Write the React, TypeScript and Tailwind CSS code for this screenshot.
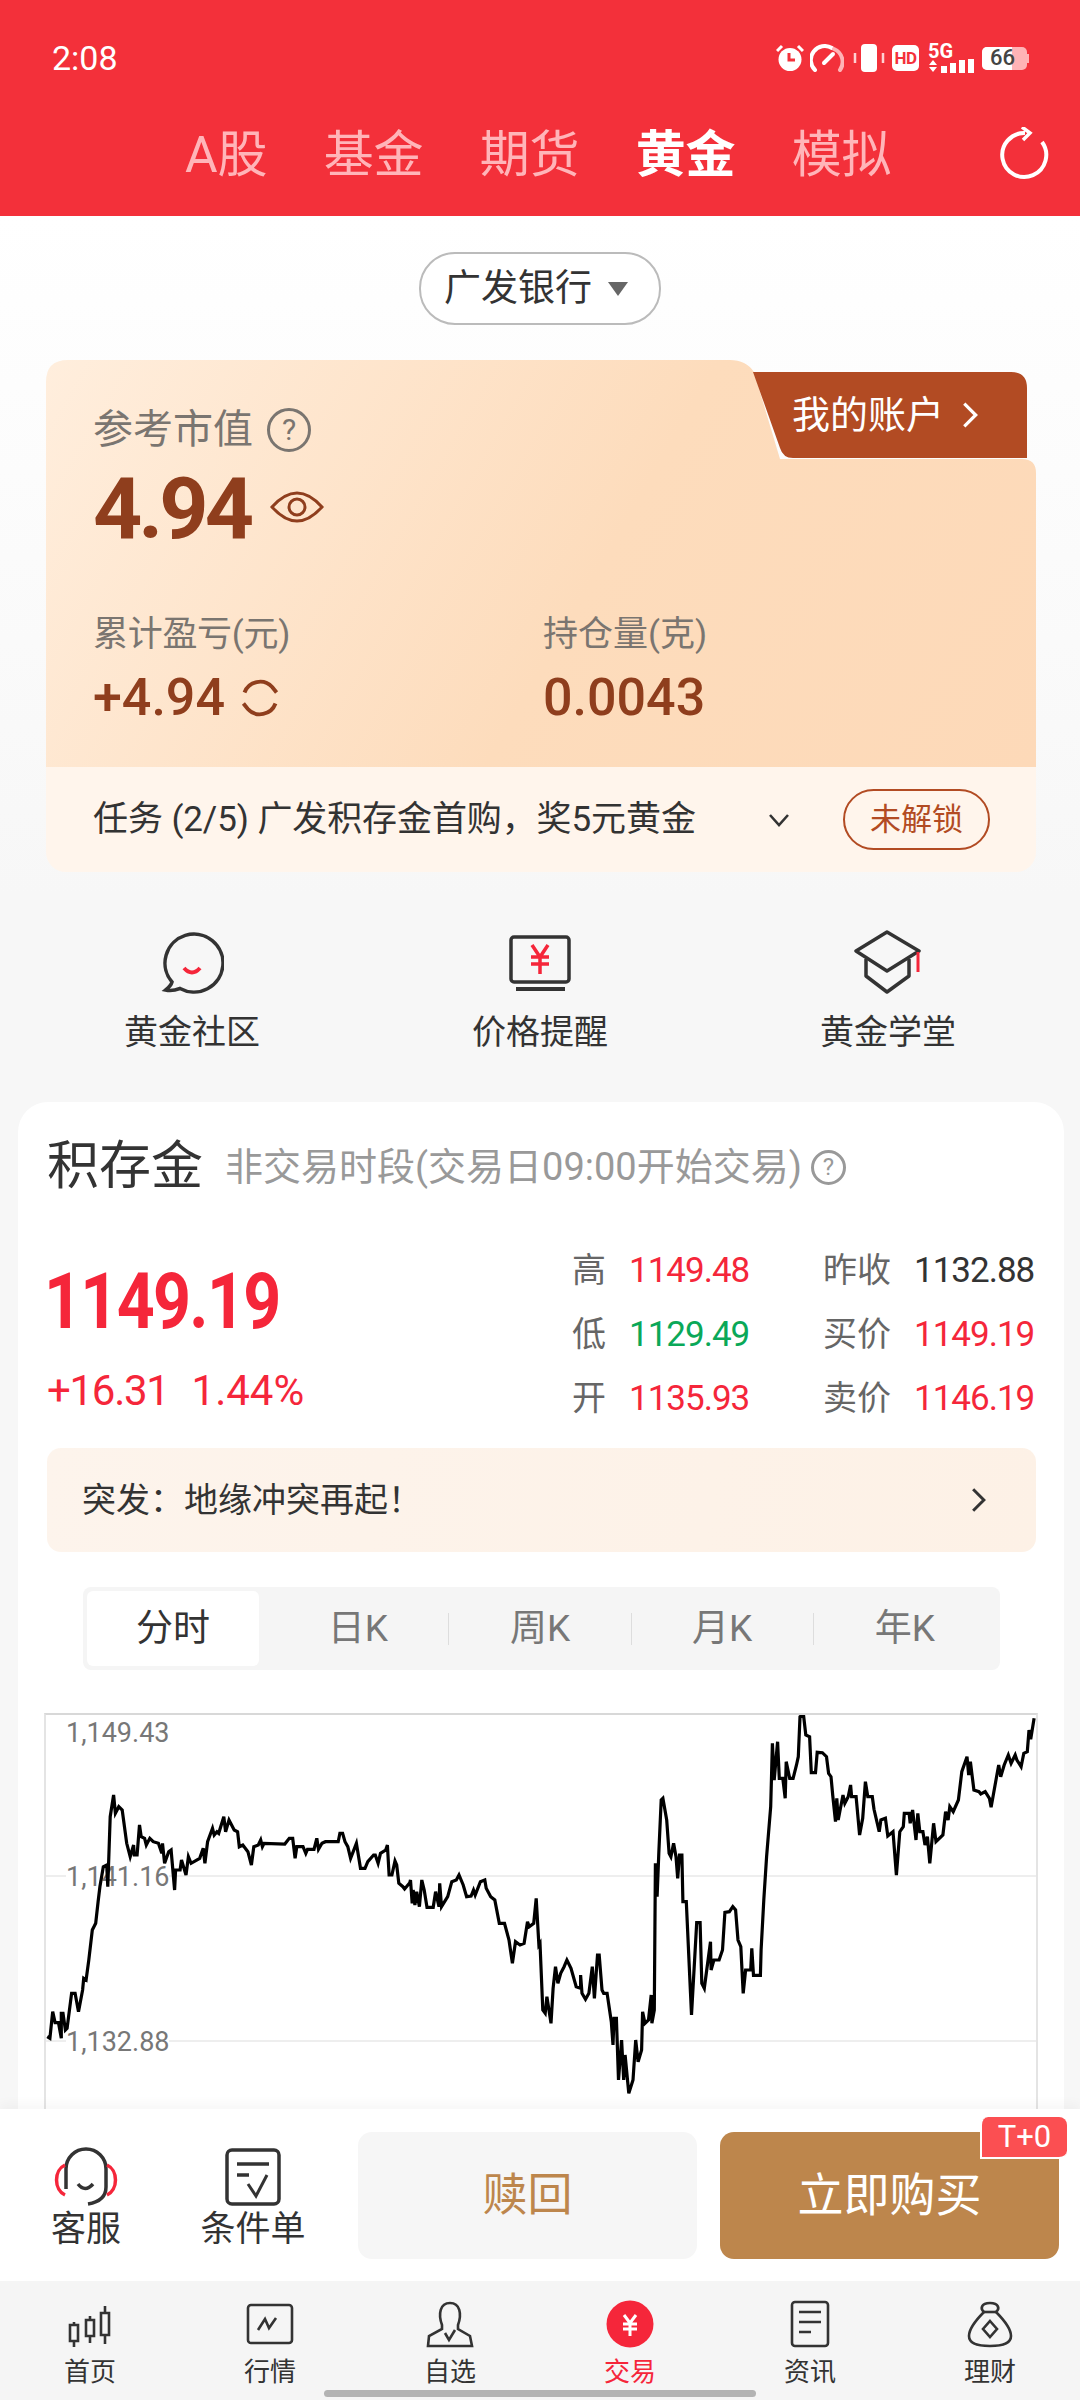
import type { ReactNode } from 'react'

// chart trace, pairs taken from the 540px wide crops (x scale 2.904, y scale 3)
const LEFT = [137,1010,145,1015,153,935,160,968,170,968,178,1015,178,940,183,940,190,990,195,985,208,880,218,880,228,935,240,870,243,835,250,840,258,780,268,690,278,670,285,605,290,560,300,500,310,495,313,560,320,350,330,285,335,340,345,320,355,330,368,430,378,470,388,435,390,465,398,465,405,375,410,410,420,415,425,435,435,415,445,425,460,430,470,460,472,430,478,490,490,455,497,450,507,570,510,510,523,510,527,480,540,525,547,470,555,490,580,475,590,445,595,490,603,425,617,385,622,405,630,395,635,400,650,350,655,395,665,360,680,390,690,395,695,440,705,435,720,455,730,495,737,440,750,435,757,420,762,440,767,430,827,432,840,415,850,415,857,475,862,440,880,440,888,460,893,448,912,448,920,415,925,448,935,430,945,425,982,425,987,400,995,400,1002,425,1010,440,1018,475,1035,430,1047,505,1060,505,1068,485,1085,465,1090,465,1098,490,1105,460,1120,450,1125,435,1130,525,1138,525,1147,483,1152,495,1158,550,1170,560,1175,567,1190,548,1192,540,1197,610,1200,570,1205,615,1210,575,1218,620,1225,540,1232,570,1240,622,1258,622,1265,575,1275,620,1277,550,1282,620,1300,590,1312,545,1325,540,1333,525,1345,555,1355,590,1368,588,1375,570,1380,585,1395,545,1408,540,1412,565,1425,590,1437,600,1450,670,1465,670,1478,720,1488,790,1497,725,1510,735,1522,730,1532,665,1537,680,1550,670,1557,595,1565,735]
const RIGHT = [0,730,8,930,15,940,20,890,32,970,38,865,45,800,52,850,60,820,70,800,78,780,90,805,105,860,118,865,118,825,122,880,132,898,142,880,152,800,158,895,167,765,172,765,180,870,185,880,195,880,207,965,212,1035,215,955,222,955,228,1140,237,1020,243,1140,247,1065,258,1180,270,1140,278,1020,285,1085,295,1050,298,935,305,970,315,960,323,885,325,970,332,930,335,490,340,590,345,460,352,300,357,295,368,360,375,460,380,470,388,430,395,470,400,535,405,465,412,465,415,605,425,605,437,880,440,945,455,668,465,668,470,850,477,865,495,725,497,810,505,780,520,780,530,750,537,637,550,635,560,620,568,630,575,720,583,740,590,880,597,810,612,810,615,745,620,826,640,826,642,750,650,600,658,470,670,320,675,130,680,240,690,125,695,235,705,235,712,295,715,185,725,235,735,235,745,195,750,170,755,50,765,42,772,105,783,110,788,218,800,218,805,157,820,158,832,170,838,220,845,230,850,285,858,365,862,295,866,360,880,285,885,310,895,290,902,255,905,290,918,290,928,405,937,355,945,245,952,290,965,290,970,328,985,395,990,360,1003,355,1010,408,1025,395,1035,525,1045,395,1055,380,1058,340,1072,340,1075,370,1082,330,1092,420,1097,340,1103,395,1112,395,1118,435,1125,410,1132,490,1143,370,1150,425,1170,405,1178,335,1185,360,1190,320,1200,335,1215,300,1225,215,1240,170,1245,225,1250,185,1260,270,1275,275,1280,282,1293,275,1305,295,1310,322,1325,235,1332,195,1338,230,1348,195,1360,165,1368,190,1380,165,1385,180,1397,200,1405,160,1415,155,1420,90,1425,118,1435,55]

function toPoints(raw: number[], offset: number) {
  const out: string[] = []
  for (let i = 0; i < raw.length; i += 2) {
    out.push(`${(offset + raw[i] / 2.904).toFixed(1)},${(1700 + raw[i + 1] / 3).toFixed(1)}`)
  }
  return out.join(' ')
}
const LINE = `${toPoints(LEFT, 0)} ${toPoints(RIGHT, 540)}`

const STATS = [
  { a: '高', b: '1149.48', bc: 'text-[#f5263a]', c: '昨收', d: '1132.88', dc: 'text-[#333]' },
  { a: '低', b: '1129.49', bc: 'text-[#0aa858]', c: '买价', d: '1149.19', dc: 'text-[#f5263a]' },
  { a: '开', b: '1135.93', bc: 'text-[#f5263a]', c: '卖价', d: '1146.19', dc: 'text-[#f5263a]' },
]

function Help({ className }: { className: string }) {
  return <span className={`flex items-center justify-center rounded-full border-[3px] ${className}`}>?</span>
}

function Chevron({ className, color = '#333' }: { className: string; color?: string }) {
  return (
    <svg viewBox="0 0 14 24" className={className} fill="none" stroke={color} strokeWidth="2.8">
      <path d="M2 2 L12 12 L2 22" />
    </svg>
  )
}

function StatusIcons() {
  return (
    <div className="ml-auto mr-[51px] flex items-center">
      <svg width="28" height="28" viewBox="0 0 28 28" className="mr-[6px]">
        <circle cx="14" cy="15.5" r="11.5" fill="#fff" />
        <path d="M1 7 L6 2 M27 7 L22 2" stroke="#fff" strokeWidth="3" />
        <path d="M13 9 V16 H19" stroke="#f4303a" strokeWidth="3" fill="none" />
      </svg>
      <svg width="34" height="28" viewBox="0 0 34 28" className="mr-[8px]" fill="none">
        <path d="M5 26 A14 14 0 0 1 22 4" stroke="#fff" strokeWidth="4" strokeLinecap="round" />
        <path d="M24 5 A14 14 0 0 1 30 26" stroke="#ffb3b6" strokeWidth="4" strokeLinecap="round" />
        <path d="M14 19 L23 10" stroke="#fff" strokeWidth="4" strokeLinecap="round" />
      </svg>
      <svg width="34" height="28" viewBox="0 0 34 28" className="mr-[6px]">
        <rect x="9" y="0" width="16" height="28" rx="4" fill="#fff" />
        <path d="M3 9 V19 M31 9 V19" stroke="#ffd0d2" strokeWidth="2.5" />
      </svg>
      <span className="mr-[9px] flex h-[26px] w-[27px] items-center justify-center rounded-[5px] bg-white font-bold text-[17px] leading-none tracking-[-0.5px] text-[#f4303a]">HD</span>
      <div className="mr-[7px] flex w-[47px] flex-col">
        <span className="h-[15px] font-bold text-[20px] leading-[15px] text-white">5G</span>
        <svg width="47" height="14" viewBox="0 0 47 14">
          <path d="M1 6 L5 1 L9 6Z M1 8 L9 8 L5 13Z" fill="#fff" />
          <path d="M13 7 H19 V14 H13Z M22 4 H28 V14 H22Z M31 1 H37 V14 H31Z M40 0 H46 V14 H40Z" fill="#fff" />
        </svg>
      </div>
      <div className="relative flex h-[23px] w-[45px] items-center overflow-hidden rounded-[5px] bg-[#ffb3b6]">
        <div className="absolute inset-y-0 left-0 w-[30px] bg-white" />
        <span className="relative ml-[8px] text-[22px] font-medium leading-none text-[#444]">66</span>
      </div>
      <span className="h-[9px] w-[2px] bg-[#ffb3b6]" />
    </div>
  )
}

function Header() {
  const tabs = ['A股', '基金', '期货', '黄金', '模拟']
  return (
    <div className="h-[216px] shrink-0 bg-[#f3303a]">
      <div className="flex h-[116px] items-center pl-[52px]">
        <span className="text-[34px] text-white">2:08</span>
        <StatusIcons />
      </div>
      <div className="flex h-[78px] items-center pl-[185px] pr-[30px]">
        {tabs.map((t) => (
          <span key={t} className={`mr-[56px] text-[50px] leading-none ${t === '黄金' ? 'font-bold text-white' : 'text-[#ffb5b9]'}`}>
            {t}
          </span>
        ))}
        <svg width="52" height="56" viewBox="0 0 52 56" fill="none" className="ml-auto" stroke="#fff" strokeWidth="4">
          <path d="M44 15 A22 22 0 1 1 27 6" />
          <path d="M24 0 L32 6 L25 13" strokeWidth="3.5" />
        </svg>
      </div>
    </div>
  )
}

function AssetCard() {
  return (
    <div className="ml-[46px] mt-[35px] w-[990px]">
      <div className="relative">
        <div className="h-[407px] bg-[linear-gradient(120deg,#ffeedd_0%,#fddcbc_55%,#fdd9b8_100%)] pl-[47px] pt-[48px] [clip-path:path('M0_22Q0_0_22_0L684_0Q700_0_708_12L734_99L976_99Q990_99_990_113L990_407L0_407Z')]">
          <div className="flex h-[44px] items-center text-[40px] leading-none text-[#7a7570]">
            参考市值
            <Help className="ml-[14px] h-[44px] w-[44px] border-[#7a7570] text-[30px]" />
          </div>
          <div className="mt-[17px] flex h-[80px] items-center">
            <span className="text-[86px] font-bold leading-none tracking-[-4px] text-[#8f3e1d]">4.94</span>
            <svg width="54" height="40" viewBox="0 0 54 40" fill="none" stroke="#8f3e1d" strokeWidth="3" className="ml-[20px] mt-[-4px]">
              <path d="M2 20 Q27 -8 52 20 Q27 48 2 20Z" />
              <circle cx="27" cy="20" r="8" />
            </svg>
          </div>
          <div className="mt-[66px] flex">
            <div className="w-[450px]">
              <div className="h-[40px] text-[35px] leading-[40px] tracking-[-0.3px] text-[#7a7570]">累计盈亏(元)</div>
              <div className="mt-[15px] flex h-[56px] items-center">
                <span className="text-[52px] font-medium leading-none text-[#8f3e1d]">+4.94</span>
                <svg width="42" height="42" viewBox="0 0 38 38" fill="none" stroke="#8f3e1d" strokeWidth="3.5" className="ml-[14px]">
                  <path d="M5 14 A15 15 0 0 1 30 9 L34 14" />
                  <path d="M33 24 A15 15 0 0 1 8 29 L4 24" />
                </svg>
              </div>
            </div>
            <div>
              <div className="h-[40px] text-[35px] leading-[40px] text-[#7a7570]">持仓量(克)</div>
              <div className="mt-[15px] flex h-[56px] items-center text-[52px] font-medium leading-none text-[#8f3e1d]">0.0043</div>
            </div>
          </div>
        </div>
        {/* 我的账户 tab sits in the notch of the card */}
        <div className="absolute left-[707px] top-[12px] flex h-[86px] w-[274px] items-center bg-[#b24b23] pl-[39px] text-[38px] leading-none text-white [clip-path:path('M0_0L258_0Q274_0_274_16L274_86L40_86Q30_86_27_76Z')]">
          我的账户
          <Chevron className="ml-[18px] h-[28px] w-[16px]" color="#fff" />
        </div>
      </div>
      <div className="flex h-[105px] items-center rounded-b-[20px] bg-[#fff5ec] pl-[47px] pr-[46px]">
        <span className="text-[35px] leading-none tracking-[-0.1px] text-[#333]">任务 (2/5) 广发积存金首购，奖5元黄金</span>
        <svg width="22" height="14" viewBox="0 0 22 14" fill="none" stroke="#333" strokeWidth="2.6" className="ml-auto">
          <path d="M2 2 L11 12 L20 2" />
        </svg>
        <span className="ml-[53px] flex h-[61px] w-[147px] items-center justify-center rounded-full border-2 border-[#b24b23] text-[31px] leading-none text-[#b24b23]">未解锁</span>
      </div>
    </div>
  )
}

function Shortcut({ icon, label }: { icon: ReactNode; label: string }) {
  return (
    <div className="flex flex-col items-center">
      <div className="flex h-[64px] items-center justify-center">{icon}</div>
      <span className="mt-[16px] text-[34px] leading-[44px] text-[#333]">{label}</span>
    </div>
  )
}

function Shortcuts() {
  return (
    <div className="mt-[58px] grid grid-cols-3 px-[18px]">
      <Shortcut
        label="黄金社区"
        icon={
          <svg width="64" height="64" viewBox="0 0 64 64" fill="none">
            <path d="M12 52 A29 29 0 1 1 20 58.5 C16 60 10 61 5.5 60 C8 58 11 56 12 52Z" stroke="#333" strokeWidth="3.5" />
            <path d="M24 38 Q32 47 40 38" stroke="#f5263a" strokeWidth="4" />
          </svg>
        }
      />
      <Shortcut
        label="价格提醒"
        icon={
          <svg width="64" height="64" viewBox="0 0 64 64" fill="none">
            <rect x="3" y="7" width="58" height="45" rx="3" stroke="#333" strokeWidth="3.5" />
            <path d="M8 59 H57" stroke="#333" strokeWidth="4" />
            <path d="M24 15 L32 27 L40 15 M23 27 H41 M23 34 H41 M32 27 V44" stroke="#f5263a" strokeWidth="3.5" />
          </svg>
        }
      />
      <Shortcut
        label="黄金学堂"
        icon={
          <svg width="68" height="64" viewBox="0 0 68 64" fill="none">
            <path d="M33 2 L65 21 L33 41 L2 21Z" stroke="#333" strokeWidth="3.5" strokeLinejoin="round" />
            <path d="M12 29 V46 L33 62 L55 46 V29" stroke="#333" strokeWidth="3.5" strokeLinejoin="round" />
            <path d="M64 22 V42" stroke="#f5263a" strokeWidth="3" />
          </svg>
        }
      />
    </div>
  )
}

function Quote() {
  return (
    <div className="pl-[29px] pr-[28px]">
      <div className="flex h-[60px] items-center">
        <span className="text-[52px] leading-none text-[#333]">积存金</span>
        <span className="ml-[22px] text-[38px] leading-none text-[#999]">非交易时段(交易日09:00开始交易)</span>
        <Help className="ml-[9px] h-[35px] w-[35px] border-[#999] text-[24px] text-[#999]" />
      </div>
      <div className="mt-[41px] flex h-[192px]">
        <div className="w-[525px] shrink-0">
          <div className="-ml-[3px] mt-[20px] h-[88px] origin-left scale-x-[0.85] text-[78px] font-bold leading-[88px] tracking-[-2px] text-[#f5263a]">1149.19</div>
          <div className="mt-[20px] flex h-[50px] items-center text-[42px] leading-none text-[#f5263a]">
            <span className="tracking-[-1.3px]">+16.31</span>
            <span className="ml-[23px]">1.44%</span>
          </div>
        </div>
        <div className="grid h-[192px] shrink-0 grid-cols-[57px_194px_91px_auto] grid-rows-3 items-center">
          {STATS.map((s) => (
            <div key={s.a} className="contents">
              <span className="text-[34px] leading-none text-[#666]">{s.a}</span>
              <span className={`text-[35px] leading-none tracking-[-1px] ${s.bc}`}>{s.b}</span>
              <span className="text-[34px] leading-none text-[#666]">{s.c}</span>
              <span className={`text-[35px] leading-none tracking-[-1px] ${s.dc}`}>{s.d}</span>
            </div>
          ))}
        </div>
      </div>
      <div className="mt-[18px] flex h-[104px] items-center rounded-[14px] bg-[linear-gradient(100deg,#fdf4ec,#fdf1e6)] pl-[35px] pr-[50px]">
        <span className="text-[34px] leading-none text-[#333]">突发：地缘冲突再起！</span>
        <Chevron className="ml-auto h-[26px] w-[15px]" />
      </div>
      <PeriodTabs />
    </div>
  )
}

function PeriodTabs() {
  const rest = ['日K', '周K', '月K', '年K']
  return (
    <div className="ml-[36px] mt-[35px] flex h-[83px] w-[917px] items-center rounded-[8px] bg-[#f5f5f5] p-[4px]">
      <div className="mr-[8px] flex h-full w-[173px] items-center justify-center rounded-[6px] bg-white text-[37px] leading-none text-[#333]">分时</div>
      {rest.map((t, i) => (
        <div key={t} className="flex h-full w-[183px] items-center">
          <span className="flex-1 text-center text-[37px] leading-none text-[#777]">{t}</span>
          {i < 3 && <span className="h-[32px] w-px bg-[#ddd]" />}
        </div>
      ))}
    </div>
  )
}

function Chart() {
  const labels = [
    { t: '1,149.43', c: 'top-0' },
    { t: '1,141.16', c: 'top-[144px]' },
    { t: '1,132.88', c: 'top-[309px]' },
  ]
  return (
    <div className="relative ml-[26px] mt-[43px] h-[400px] w-[994px] border-x-2 border-t-2 border-x-[#e4e4e4] border-t-[#d8d8d8]">
      <div className="absolute inset-x-0 top-[160px] h-[2px] bg-[#eee]" />
      <div className="absolute inset-x-0 top-[325px] h-[2px] bg-[#eee]" />
      {labels.map((l) => (
        <span key={l.t} className={`absolute left-[20px] bg-white text-[27px] leading-[36px] text-[#777] ${l.c}`}>
          {l.t}
        </span>
      ))}
      <svg viewBox="46 1715 990 394" className="absolute left-0 top-0 h-[394px] w-[990px]" fill="none">
        <polyline points={LINE} stroke="#000" strokeWidth="3.2" strokeLinejoin="miter" />
      </svg>
    </div>
  )
}

function ActionBar() {
  return (
    <div className="relative z-10 flex h-[172px] shrink-0 items-center bg-white shadow-[0_-6px_10px_rgba(0,0,0,0.03)]">
      <div className="mt-[10px] flex w-[172px] flex-col items-center">
        <svg width="68" height="60" viewBox="0 0 68 60" fill="none">
          <path d="M14 42 V22 A20 20 0 0 1 54 22 V40 Q54 54 36 57" stroke="#333" strokeWidth="3.5" />
          <path d="M13 18 A13 16 0 0 0 13 48 M55 18 A13 16 0 0 1 55 48" stroke="#f5263a" strokeWidth="3.5" />
          <path d="M26 37 Q33 46 41 37" stroke="#333" strokeWidth="3.5" />
        </svg>
        <span className="text-[35px] leading-[46px] text-[#333]">客服</span>
      </div>
      <div className="mt-[10px] flex w-[162px] flex-col items-center">
        <svg width="68" height="60" viewBox="0 0 68 60" fill="none" stroke="#333">
          <rect x="8" y="3" width="52" height="54" rx="5" strokeWidth="3.5" />
          <path d="M18 17 H50 M18 28 H30" strokeWidth="3.5" />
          <path d="M29 37 L37 49 L48 28" strokeWidth="3" />
        </svg>
        <span className="text-[35px] leading-[46px] text-[#333]">条件单</span>
      </div>
      <div className="ml-[24px] flex h-[127px] w-[339px] items-center justify-center rounded-[14px] bg-[#f6f6f6] text-[45px] leading-none text-[#bd864c]">赎回</div>
      <div className="relative ml-[23px] flex h-[127px] w-[339px] items-center justify-center rounded-[14px] bg-[#bd864c] text-[46px] leading-none text-white">
        立即购买
        <span className="absolute right-[-8px] top-[-15px] flex h-[42px] w-[87px] items-center justify-center rounded-[8px] rounded-bl-none border-b-2 border-l-2 border-white bg-[#fb4f52] text-[31px] leading-none">T+0</span>
      </div>
    </div>
  )
}

function NavItem({ label, active, children }: { label: string; active?: boolean; children: ReactNode }) {
  return (
    <div className="flex w-[180px] flex-col items-center">
      <svg width="48" height="48" viewBox="0 0 48 48" fill="none" stroke="#333" strokeWidth="2.6">
        {children}
      </svg>
      <span className={`mt-[6px] text-[26px] leading-[36px] ${active ? 'text-[#f5263a]' : 'text-[#333]'}`}>{label}</span>
    </div>
  )
}

function BottomNav() {
  return (
    <div className="relative flex h-[119px] shrink-0 bg-[#f5f5f5] pt-[19px]">
      <NavItem label="首页">
        <path d="M4 25 H12 V41 H4Z M8 25 V22 M8 41 V47 M20 20 H28 V36 H20Z M24 20 V16 M24 36 V43 M35 13 H43 V35 H35Z M39 13 V6 M39 35 V44" />
      </NavItem>
      <NavItem label="行情">
        <rect x="2" y="5" width="44" height="38" rx="3" />
        <path d="M12 30 L19 19 L23 28 L30 18" />
      </NavItem>
      <NavItem label="自选">
        <path d="M16 25 C12 14 14 3 24 3 C34 3 36 14 32 25 L32 29 L44 36 L46 46 H2 L3 36 L16 29Z" />
        <path d="M19 33 L23 40 L29 30" />
      </NavItem>
      <NavItem label="交易" active>
        <circle cx="24" cy="24" r="23.5" fill="#f5263a" stroke="none" />
        <path d="M18 15 L24 23 L30 15 M17 24 H31 M17 29 H31 M24 23 V36" stroke="#fff" strokeWidth="3" />
      </NavItem>
      <NavItem label="资讯">
        <rect x="6" y="2" width="36" height="44" rx="3" />
        <path d="M13 12 H35 M13 22 H35 M13 32 H25" />
      </NavItem>
      <NavItem label="理财">
        <path d="M18 12 C14 9 15 3 24 3 C33 3 34 9 30 12 C38 20 45 28 45 36 C45 44 36 46 24 46 C12 46 3 44 3 36 C3 28 10 20 18 12Z" />
        <path d="M18 12 H30" />
        <path d="M24 21 L31 29 L24 37 L17 29Z" />
      </NavItem>
      <span className="absolute bottom-[3px] left-[324px] h-[7px] w-[432px] rounded-full bg-[#b3b3b3]" />
    </div>
  )
}

export default function App() {
  return (
    <div className="flex h-[2400px] w-[1080px] flex-col overflow-hidden bg-white font-[Roboto,'Noto_Sans_CJK_SC',sans-serif]">
      <Header />
      <div className="min-h-0 flex-1 overflow-hidden bg-[linear-gradient(180deg,#fff_0px,#f7f7f7_680px)]">
        <div className="mx-auto mt-[36px] flex h-[73px] w-[242px] items-center rounded-[36px] border-2 border-[#bbb] bg-white pl-[23px] text-[37px] leading-none text-[#333]">
          广发银行
          <svg width="20" height="14" viewBox="0 0 20 14" className="ml-[16px]">
            <path d="M0 0 H20 L10 14Z" fill="#666" />
          </svg>
        </div>
        <AssetCard />
        <Shortcuts />
        <div className="ml-[18px] mt-[48px] h-[1100px] w-[1046px] rounded-t-[30px] bg-white pt-[35px]">
          <Quote />
          <Chart />
        </div>
      </div>
      <ActionBar />
      <BottomNav />
    </div>
  )
}
